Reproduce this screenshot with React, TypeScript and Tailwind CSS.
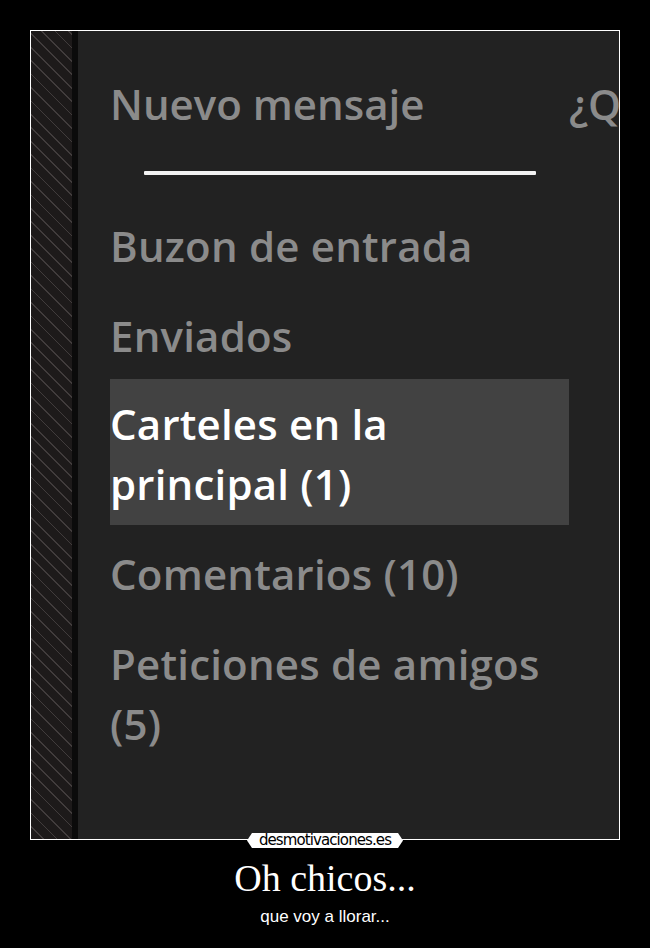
const items = [
  { lines: ["Buzon de entrada"], active: false },
  { lines: ["Enviados"], active: false },
  { lines: ["Carteles en la", "principal (1)"], active: true },
  { lines: ["Comentarios (10)"], active: false },
  { lines: ["Peticiones de amigos", "(5)"], active: false },
];

export default function App() {
  return (
    <div className="w-[650px] h-[948px] bg-black flex flex-col items-center pt-[30px] font-['Open_Sans',sans-serif]">
      {/* poster frame */}
      <div className="relative w-[590px] h-[810px] border border-white flex">
        {/* hatched strip */}
        <div className="w-[41px] h-full bg-[#1d1a1a] bg-[repeating-linear-gradient(45deg,#1d1a1a_0px,#1d1a1a_8.3px,#413c3c_8.3px,#413c3c_9.5px)]" />
        <div className="w-[6px] h-full bg-[#0b0b0b]" />
        <div className="flex-1 bg-[#222222] overflow-hidden flex pl-[32px]">
          <div className="w-[459px] shrink-0 pt-[43px]">
            <div className="text-[42px] font-semibold leading-[60px] text-[#8b8b8b]">Nuevo mensaje</div>
            <div className="ml-[34px] mt-[37px] w-[392px] h-[4px] bg-[#f2f2f2] rounded-[1px]" />
            <div className="mt-[26px] flex flex-col">
              {items.map((it) => (
                <div
                  key={it.lines[0]}
                  className={`text-[42px] font-semibold leading-[60px] tracking-[0.2px] whitespace-nowrap ${
                    it.active
                      ? "bg-[#424242] text-white pt-[15px] pb-[11px] -mt-[2px] mb-[4px]"
                      : "text-[#8b8b8b] py-[15px]"
                  }`}
                >
                  {it.lines.map((l) => (
                    <div key={l}>{l}</div>
                  ))}
                </div>
              ))}
            </div>
          </div>
          <div className="pt-[43px] text-[42px] font-semibold leading-[60px] text-[#8b8b8b] whitespace-nowrap">¿Q</div>
        </div>
        {/* logo tag */}
        <div className="absolute left-1/2 -translate-x-1/2 -bottom-[9px] w-[156px] h-[15px] bg-white [clip-path:polygon(5px_0,151px_0,156px_50%,151px_100%,5px_100%,0_50%)] flex items-center justify-center">
          <span className="text-[15px] leading-none text-black tracking-[-0.9px] font-['DejaVu_Sans',sans-serif]">desmotivaciones.es</span>
        </div>
      </div>
      <div className="mt-[17px] text-[38px] leading-[42px] text-white font-['Liberation_Serif',serif]">Oh chicos...</div>
      <div className="mt-[8px] text-[17px] leading-[20px] text-white font-['Liberation_Sans',sans-serif]">que voy a llorar...</div>
    </div>
  );
}
